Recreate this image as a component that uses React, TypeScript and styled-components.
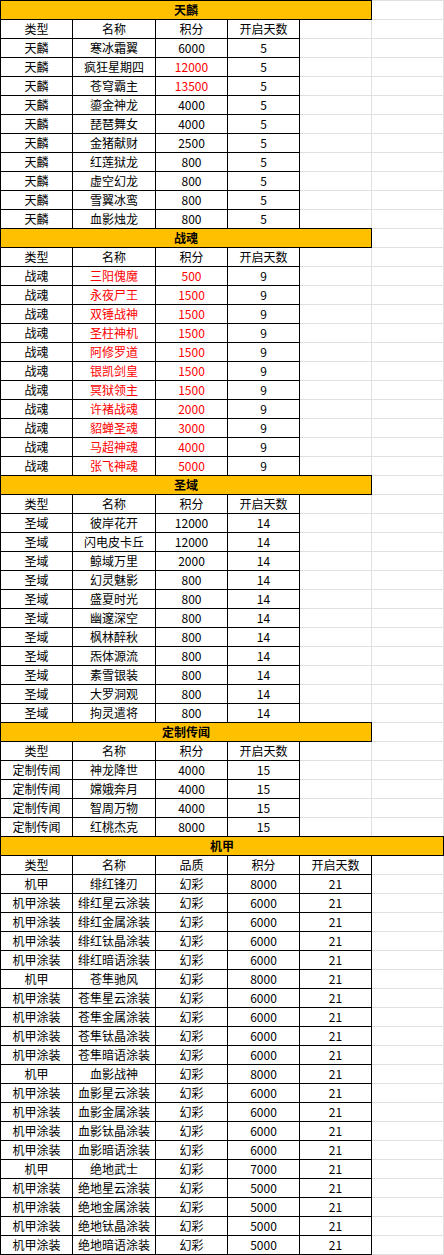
import React from 'react';
import styled, { createGlobalStyle } from 'styled-components';

const GlobalStyle = createGlobalStyle`
  html, body {
    margin: 0;
    padding: 0;
    background: #fff;
  }
  body {
    font-family: "Noto Sans CJK SC", "Noto Sans", sans-serif;
    font-size: 12px;
    color: #000;
  }
`

// sheet with light grid lines behind the table
const Sheet = styled.div`
  width: 444px;
  min-height: 1255px;
  display: flex;
  flex-direction: column;
  background-color: #fff;
  background-image:
    linear-gradient(to right, transparent 371px, #e0e0e0 371px, #e0e0e0 372px, transparent 372px, transparent 443px, #e0e0e0 443px, #e0e0e0 444px),
    repeating-linear-gradient(to bottom, #e0e0e0 0, #e0e0e0 1px, transparent 1px, transparent 19px);
`

const Row = styled.div<{ $first?: boolean }>`
  display: flex;
  height: ${p => (p.$first ? 20 : 19)}px;
`

const widths = [73, 83, 72, 72, 72, 72]

const Cell = styled.div<{ $col: number; $red?: boolean; $first?: boolean }>`
  box-sizing: border-box;
  width: ${p => widths[p.$col]}px;
  flex-shrink: 0;
  display: flex;
  align-items: center;
  justify-content: center;
  border-right: 1px solid #000;
  border-bottom: 1px solid #000;
  border-left: ${p => (p.$col === 0 ? '1px solid #000' : 'none')};
  border-top: ${p => (p.$first ? '1px solid #000' : 'none')};
  color: ${p => (p.$red ? '#ff0000' : '#000')};
  white-space: nowrap;
  line-height: 1;
`

const Title = styled.div<{ $wide?: boolean; $first?: boolean }>`
  box-sizing: border-box;
  width: ${p => (p.$wide ? 444 : 372)}px;
  display: flex;
  align-items: center;
  justify-content: center;
  background: #ffc000;
  border: 1px solid #000;
  border-top: ${p => (p.$first ? '1px solid #000' : 'none')};
  box-shadow: ${p => (p.$first ? 'none' : '0 -1px 0 #000')};
  font-weight: 700;
  line-height: 1;
`

type Item = { cells: string[]; red?: number[] }

type Section = { title: string; head: string[]; rows: Item[]; wide?: boolean }

const r = (cells: string[], red?: number[]): Item => ({ cells, red })

const sections: Section[] = [
  {
    title: '天麟',
    head: ['类型', '名称', '积分', '开启天数'],
    rows: [
      r(['天麟', '寒冰霜翼', '6000', '5']),
      r(['天麟', '疯狂星期四', '12000', '5'], [2]),
      r(['天麟', '苍穹霸主', '13500', '5'], [2]),
      r(['天麟', '鎏金神龙', '4000', '5']),
      r(['天麟', '琵琶舞女', '4000', '5']),
      r(['天麟', '金猪献财', '2500', '5']),
      r(['天麟', '红莲狱龙', '800', '5']),
      r(['天麟', '虚空幻龙', '800', '5']),
      r(['天麟', '雪翼冰鸾', '800', '5']),
      r(['天麟', '血影烛龙', '800', '5']),
    ],
  },
  {
    title: '战魂',
    head: ['类型', '名称', '积分', '开启天数'],
    rows: [
      ['三阳傀魔', '500'],
      ['永夜尸王', '1500'],
      ['双锤战神', '1500'],
      ['圣柱神机', '1500'],
      ['阿修罗道', '1500'],
      ['银凯剑皇', '1500'],
      ['冥狱领主', '1500'],
      ['许褚战魂', '2000'],
      ['貂蝉圣魂', '3000'],
      ['马超神魂', '4000'],
      ['张飞神魂', '5000'],
    ].map(([n, s]) => r(['战魂', n, s, '9'], [1, 2])),
  },
  {
    title: '圣域',
    head: ['类型', '名称', '积分', '开启天数'],
    rows: [
      ['彼岸花开', '12000'],
      ['闪电皮卡丘', '12000'],
      ['鲸域万里', '2000'],
      ['幻灵魅影', '800'],
      ['盛夏时光', '800'],
      ['幽邃深空', '800'],
      ['枫林醉秋', '800'],
      ['炁体源流', '800'],
      ['素雪银装', '800'],
      ['大罗洞观', '800'],
      ['拘灵遣将', '800'],
    ].map(([n, s]) => r(['圣域', n, s, '14'])),
  },
  {
    title: '定制传闻',
    head: ['类型', '名称', '积分', '开启天数'],
    rows: [
      ['神龙降世', '4000'],
      ['嫦娥奔月', '4000'],
      ['智周万物', '4000'],
      ['红桃杰克', '8000'],
    ].map(([n, s]) => r(['定制传闻', n, s, '15'])),
  },
  {
    title: '机甲',
    wide: true,
    head: ['类型', '名称', '品质', '积分', '开启天数'],
    rows: [
      ['绯红', '绯红锋刃', '8000', '6000', '5000'],
      ['苍隼', '苍隼驰风', '8000', '6000'],
      ['血影', '血影战神', '8000', '6000'],
      ['绝地', '绝地武士', '7000', '5000'],
    ].flatMap(([prefix, mech, mechScore, skinScore]) => [
      r(['机甲', mech, '幻彩', mechScore, '21']),
      ...['星云', '金属', '钛晶', '暗语'].map(s =>
        r(['机甲涂装', `${prefix}${s}涂装`, '幻彩', skinScore, '21'])
      ),
    ]),
  },
]

export default function App() {
  let rowIndex = 0
  return (
    <>
      <GlobalStyle />
      <Sheet>
        {sections.map(sec => {
          const first = rowIndex === 0
          rowIndex += sec.rows.length + 2
          return (
            <React.Fragment key={sec.title}>
              <Row $first={first}>
                <Title $wide={sec.wide} $first={first}>{sec.title}</Title>
              </Row>
              <Row>
                {sec.head.map((h, i) => (
                  <Cell key={h} $col={i}>{h}</Cell>
                ))}
              </Row>
              {sec.rows.map((row, ri) => (
                <Row key={ri}>
                  {row.cells.map((c, i) => (
                    <Cell key={i} $col={i} $red={row.red?.includes(i)}>{c}</Cell>
                  ))}
                </Row>
              ))}
            </React.Fragment>
          )
        })}
      </Sheet>
    </>
  )
}
